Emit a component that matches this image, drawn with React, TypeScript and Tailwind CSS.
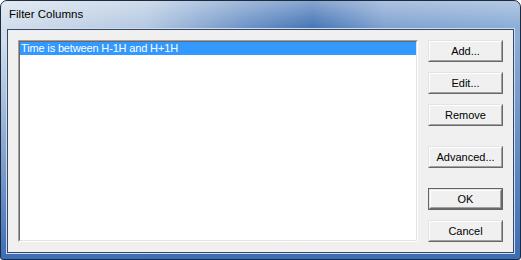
import React from "react";

function DialogButton({ label, isDefault }: { label: string; isDefault?: boolean }) {
  const inner = (
    <div className="h-full border border-t-[#e3e3e3] border-l-[#e3e3e3] border-r-[#696969] border-b-[#696969]">
      <div className="h-full border border-t-white border-l-white border-r-[#a0a0a0] border-b-[#a0a0a0] bg-[#f0f0f0] flex items-center justify-center text-[11px] text-black">
        {label}
      </div>
    </div>
  );
  if (isDefault) {
    return <div className="w-[75px] h-[22px] border border-[#646464]">{inner}</div>;
  }
  return <div className="w-[75px] h-[22px]">{inner}</div>;
}

export default function App() {
  return (
    <div className="w-[521px] h-[260px] font-['Liberation_Sans',Arial,sans-serif]">
      <div className="w-full h-full flex flex-col border border-[#1d2b40] rounded-t-[7px] rounded-b-[3px] overflow-hidden bg-[linear-gradient(to_bottom,rgba(61,109,180,0)_15%,#3d6db4_100%),linear-gradient(to_right,#d3dfec_0%,#b4c8e1_28%,#6a91c6_48%,#4675b6_60%,#80a2d0_74%,#8badd6_100%)]">
        <div className="h-[27px] flex items-center pl-[8px] text-[11.5px] text-black bg-[linear-gradient(to_bottom,rgba(255,255,255,0.35),rgba(255,255,255,0))]">
          Filter Columns
        </div>
        <div className="flex-1 flex flex-col px-[5px] pb-[5px]">
          <div className="flex-1 flex flex-col border border-[#d2ddec]">
            <div className="flex-1 flex border border-[#34486a] bg-[#f0f0f0] p-[10px] gap-[10px]">
              <div className="w-[400px] border border-t-[#a0a0a0] border-l-[#a0a0a0] border-r-white border-b-white">
                <div className="h-full border border-t-[#696969] border-l-[#696969] border-r-[#e3e3e3] border-b-[#e3e3e3] bg-white">
                  <div className="h-[13px] bg-[#3399ff] text-white text-[11px] leading-[13px] pl-[1px] tracking-[-0.15px] whitespace-nowrap">
                    Time is between H-1H and H+1H
                  </div>
                </div>
              </div>
              <div className="flex flex-col">
                <DialogButton label="Add..." />
                <div className="mt-[10px]">
                  <DialogButton label="Edit..." />
                </div>
                <div className="mt-[10px]">
                  <DialogButton label="Remove" />
                </div>
                <div className="mt-[20px]">
                  <DialogButton label="Advanced..." />
                </div>
                <div className="mt-[20px]">
                  <DialogButton label="OK" isDefault />
                </div>
                <div className="mt-[10px]">
                  <DialogButton label="Cancel" />
                </div>
              </div>
            </div>
          </div>
        </div>
      </div>
    </div>
  );
}
